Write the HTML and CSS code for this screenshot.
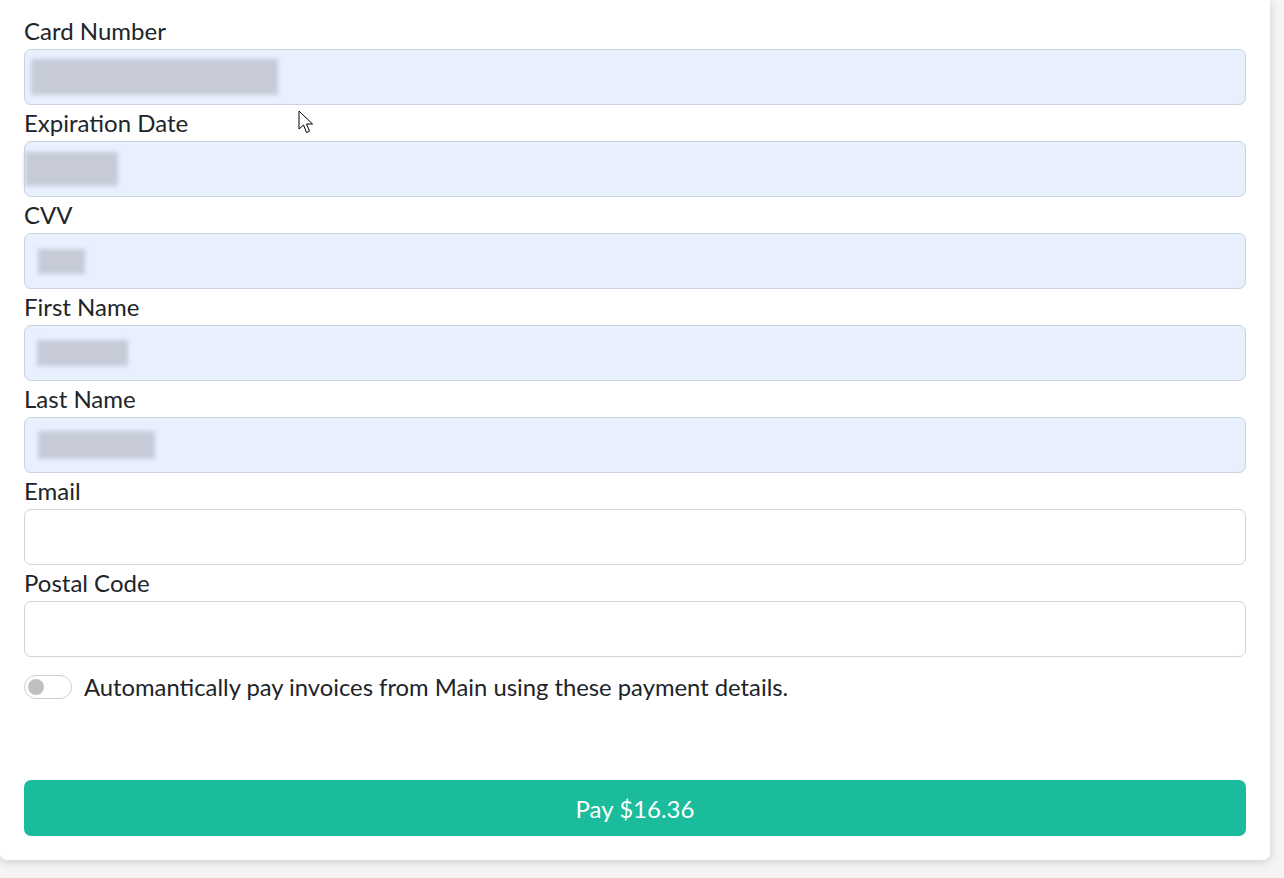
FILE: index.html
```html
<!DOCTYPE html>
<html>
<head>
<meta charset="utf-8">
<link rel="stylesheet" href="styles.css">
</head>
<body>
<div class="card">
  <form class="form">
    <div class="field">
      <label class="label">Card Number</label>
      <div class="input filled"><span class="blur b-card"></span></div>
    </div>
    <div class="field">
      <label class="label">Expiration Date</label>
      <div class="input filled"><span class="blur b-exp"></span></div>
    </div>
    <div class="field">
      <label class="label">CVV</label>
      <div class="input filled"><span class="blur b-cvv"></span></div>
    </div>
    <div class="field">
      <label class="label">First Name</label>
      <div class="input filled"><span class="blur b-first"></span></div>
    </div>
    <div class="field">
      <label class="label">Last Name</label>
      <div class="input filled"><span class="blur b-last"></span></div>
    </div>
    <div class="field">
      <label class="label">Email</label>
      <div class="input"></div>
    </div>
    <div class="field">
      <label class="label">Postal Code</label>
      <div class="input"></div>
    </div>
    <div class="switch-row">
      <span class="switch"><span class="knob"></span></span>
      <span class="switch-text">Automantically pay invoices from Main using these payment details.</span>
    </div>
    <button type="button" class="pay">Pay $16.36</button>
  </form>
</div>
<svg class="cursor" width="20" height="26" viewBox="0 0 20 26">
  <path d="M1 1 L1 19 L5.5 15 L8.5 22.5 L11.5 21.2 L8.5 14 L14.5 14 Z" fill="#fff" stroke="#000" stroke-width="1" stroke-linejoin="miter"/>
</svg>
</body>
</html>
```

FILE: styles.css
```css
html, body {
  margin: 0;
  padding: 0;
}
body {
  background: #f4f4f4;
  font-family: Lato, "Open Sans", sans-serif;
  color: #212428;
  height: 878px;
  overflow: hidden;
  position: relative;
}
.card {
  width: 1270px;
  box-sizing: border-box;
  background: #fff;
  border-radius: 0 0 7px 7px;
  box-shadow: 0 2px 10px rgba(0, 0, 0, 0.16);
  padding: 13px 24px 24px 24px;
}
.form {
  display: flex;
  flex-direction: column;
}
.label {
  display: block;
  font-size: 24px;
  line-height: 36px;
  height: 36px;
}
.input {
  height: 56px;
  box-sizing: border-box;
  border: 1px solid #ced4da;
  border-radius: 7px;
  background: #fff;
  position: relative;
  display: flex;
  align-items: center;
}
.input.filled {
  background: #e8f0fe;
  border-color: #c9d2e0;
}
.blur {
  display: block;
  background: #c6cbd7;
  filter: blur(2px);
}
.b-card { width: 247px; height: 36px; margin-left: 6px; }
.b-exp { width: 93px; height: 34px; margin-left: 0; }
.b-cvv { width: 47px; height: 25px; margin-left: 13px; }
.b-first { width: 91px; height: 26px; margin-left: 12px; }
.b-last { width: 117px; height: 28px; margin-left: 13px; }
.switch-row {
  display: flex;
  align-items: center;
  gap: 12px;
  margin-top: 17px;
  height: 26px;
}
.switch {
  width: 48px;
  height: 24px;
  box-sizing: border-box;
  border: 1px solid #cfcfcf;
  border-radius: 12px;
  display: flex;
  align-items: center;
  padding-left: 3px;
}
.knob {
  width: 16px;
  height: 16px;
  border-radius: 50%;
  background: #bfbfbf;
}
.switch-text {
  font-size: 23.8px;
}
.pay {
  margin-top: 80px;
  height: 56px;
  border: none;
  border-radius: 7px;
  background: #1abc9c;
  color: #fff;
  font-family: Lato, "Open Sans", sans-serif;
  font-size: 24px;
  width: 100%;
}
.cursor {
  position: absolute;
  left: 298px;
  top: 110px;
}
```
